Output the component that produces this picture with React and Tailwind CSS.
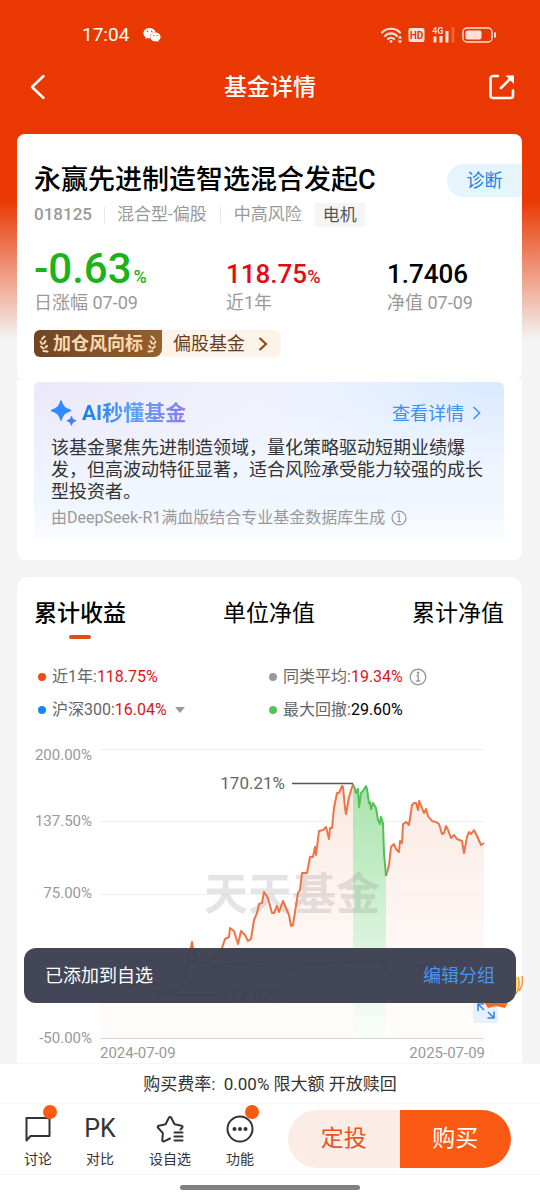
import { useState } from 'react'
import { FaWeixin } from 'react-icons/fa'

const STATS = [
  { label: '近1年', value: '118.75', unit: '%', color: 'text-[#e60a10]' },
  { label: '净值 07-09', value: '1.7406', unit: '', color: 'text-black' },
]

const TABS = ['累计收益', '单位净值', '累计净值']

const GRID = [
  { y: 9, label: '200.00%', ty: 20 },
  { y: 81, label: '137.50%', ty: 86 },
  { y: 154, label: '75.00%', ty: 158 },
]

// Fund return, before / during / after the max drawdown
const RISE =
  '66,240 74,246 82,243 92,247 104,244 116,252 124,250 134,253 144,249 150,240 154,222 158,202 160,214 164,222 174,224 180,216 184,217 188,208 191,199 195,197 196,188 200,191 204,204 207,191 211,195 214,201 217,199 220,180 223,173 225,164 228,163 230,152 234,158 238,173 240,173 243,166 245,172 249,161 252,168 255,175 257,186 259,185 261,172 264,153 266,150 268,133 273,133 276,117 279,117 281,107 282,115 285,91 289,90 292,87 295,99 296,88 298,88 300,68 303,53 305,53 308,46 309,47 311,68 312,74 315,57 319,44'
const DRAWDOWN =
  '319,44 321,49 322,53 324,49 325,67 327,53 329,51 332,46 333,49 335,63 336,62 337,69 339,63 342,68 344,80 346,84 347,77 349,83 350,113 352,136'
const RECOVERY =
  '352,136 355,125 357,107 360,104 362,109 365,112 366,101 368,103 369,84 372,82 375,85 378,65 380,63 382,63 384,70 385,61 388,68 390,73 392,69 394,76 398,81 402,82 405,84 408,94 410,93 412,86 414,90 417,98 420,95 423,99 428,101 430,113 433,97 435,92 437,94 440,90 443,96 447,105 450,103'
const AVERAGE =
  '66,240 90,241 120,243 145,240 158,222 168,228 185,227 205,222 225,226 250,231 275,226 300,224 330,220 348,222 353,236 370,228 400,224 430,220 450,214'
const HS300 =
  '66,240 90,242 120,245 145,242 158,220 168,230 185,224 205,225 225,222 250,232 275,223 300,223 330,222 348,221 353,232 370,226 400,226 430,222 450,217'

function StatusBar() {
  return (
    <div className="flex h-[54px] items-center justify-between pt-4 pr-[42px] pl-[82px] text-white">
      <div className="flex items-center gap-[14px]">
        <span className="text-[19px]">17:04</span>
        <FaWeixin className="h-[18px] w-[18px]" />
      </div>
      <svg viewBox="0 0 118 18" className="h-[18px] w-[118px] opacity-85" fill="none" stroke="currentColor">
        <g strokeWidth="2.200" strokeLinecap="round">
          <path d="M2 6.500c4.500-5 13.500-5 18 0" />
          <path d="M5 10c3-3.500 9-3.500 12 0" />
          <path d="M8 13c1.500-1.700 4.500-1.700 6 0" />
        </g>
        <circle cx="11" cy="15.500" r="1.400" fill="currentColor" stroke="none" />
        <path d="M20 9.500l2.300 3h-4.600zM20 17.500l2.300-3h-4.600z" fill="currentColor" stroke="none" />
        <rect x="28.500" y="2" width="16" height="14" rx="2" fill="currentColor" stroke="none" />
        <text x="36.500" y="13" textAnchor="middle" fontSize="10" fontWeight="700" fill="#e93802" stroke="none">HD</text>
        <text x="52" y="8" fontSize="9" fontWeight="700" fill="currentColor" stroke="none">4G</text>
        <path d="M55 10.500v6M61 10v6.500M67 5v11.500" strokeWidth="3" />
        <path d="M73 1v15.500" strokeWidth="3" opacity=".25" />
        <rect x="83" y="2" width="29" height="14" rx="4" strokeWidth="1.500" />
        <rect x="85.500" y="4.500" width="16" height="9" rx="2" fill="currentColor" stroke="none" />
        <path d="M115 6.500v5" strokeWidth="2" />
      </svg>
    </div>
  )
}

function Header() {
  return (
    <header className="mb-[14px] flex h-[66px] items-center justify-between pr-[24px] pl-[24px] text-white">
      <button aria-label="返回" className="flex w-7 justify-center">
        <svg viewBox="0 0 16 26" className="h-[26px] w-4" fill="none" stroke="currentColor" strokeWidth="2.500" strokeLinecap="round" strokeLinejoin="round">
          <path d="M13.500 2L2 13L13.500 24" />
        </svg>
      </button>
      <h1 className="pt-[2px] text-[23px] leading-8 font-medium">基金详情</h1>
      <button aria-label="分享">
        <svg viewBox="0 0 28 28" className="h-7 w-7" fill="none" stroke="currentColor" strokeWidth="2.600" strokeLinecap="round" strokeLinejoin="round">
          <path d="M10 3H5a2.500 2.500 0 0 0-2.500 2.500V22.500A2.500 2.500 0 0 0 5 25h17.500a2.500 2.500 0 0 0 2.500-2.500v-5" />
          <path d="M13 15L24 4" />
          <path d="M17.500 2.500h8.500v8.500z" fill="currentColor" stroke="none" />
        </svg>
      </button>
    </header>
  )
}

function InfoIcon({ className }) {
  return (
    <svg viewBox="0 0 18 18" className={className} fill="none" stroke="#999" strokeWidth="1.400">
      <circle cx="9" cy="9" r="7.800" />
      <path d="M7.500 7.500H9.200V13M7.200 13h4" />
      <circle cx="9" cy="4.900" r=".6" fill="#999" />
    </svg>
  )
}

function Laurel({ className }) {
  return (
    <svg viewBox="0 0 10 18" className={className} fill="none" stroke="#f8d9ae" strokeWidth="2" strokeLinecap="round">
      <path d="M5.500 1.500L3 4M1.500 6.500L3 9M6.500 6L5 8.500M2 11.500L4.500 13.500M8 11L6.500 12.500M4.500 16L8.500 16.500" />
    </svg>
  )
}

function FundCard() {
  return (
    <section className="rounded-lg bg-white pt-[26px] pb-[23px] pl-[17px]">
      <div className="flex h-10 items-center justify-between">
        <h2 className="text-[27px] leading-10 font-medium whitespace-nowrap text-black">永赢先进制造智选混合发起C</h2>
        <button className="h-[33px] w-[75px] shrink-0 rounded-l-full bg-[#e6f4fe] text-[18px] leading-[33px] text-[#1787e0]">诊断</button>
      </div>
      <div className="mt-[3px] flex h-6 items-center text-[17px] whitespace-nowrap text-[#999]">
        <span className="font-medium">018125</span>
        <span className="mx-3 h-4 w-px bg-[#e8e8e8]" />
        <span>混合型-偏股</span>
        <span className="mx-[13px] h-4 w-px bg-[#e8e8e8]" />
        <span>中高风险</span>
        <span className="ml-[13px] bg-[#f5f5f5] px-2 leading-6 text-[#555]">电机</span>
      </div>
      <div className="mt-[18px] grid grid-cols-[192fr_161fr_135fr] items-end">
        <div>
          <p className="h-12 text-[42px] leading-[48px] font-medium text-[#1ab31a]">
            -0.63<span className="ml-[2px] text-[18px] leading-none">%</span>
          </p>
          <p className="text-[18px] leading-5 text-[#999]">日涨幅 07-09</p>
        </div>
        {STATS.map(s => (
          <div key={s.label}>
            <p className={`h-[38px] text-[26px] leading-[38px] font-medium ${s.color}`}>
              {s.value}<span className="text-[18px] leading-none">{s.unit}</span>
            </p>
            <p className="text-[18px] leading-5 text-[#999]">{s.label}</p>
          </div>
        ))}
      </div>
      <a href="#rank" className="mt-[17px] flex h-[27px] w-[247px] items-center rounded-md bg-[#fdf3e8] text-[#6b3d1c]">
        <span className="flex h-full w-[128px] items-center justify-center gap-1 rounded-l-md rounded-br-lg bg-linear-to-r from-[#6f4525] to-[#96602f] text-[18px] font-bold text-[#f8d9ae]">
          <Laurel className="h-[18px] w-[10px]" />
          加仓风向标
          <Laurel className="h-[18px] w-[10px] -scale-x-100" />
        </span>
        <span className="ml-[11px] text-[18px]">偏股基金</span>
        <svg viewBox="0 0 10 16" className="ml-[13px] h-4 w-[10px]" fill="none" stroke="#8a4a1c" strokeWidth="2.200">
          <path d="M1.500 2L8 8L1.500 14" />
        </svg>
      </a>
    </section>
  )
}

function AiCard() {
  return (
    <section className="rounded-b-lg bg-white pt-[2px] pr-[18px] pb-[19px] pl-[17px]">
      <div className="rounded-md bg-[radial-gradient(ellipse_at_top_left,#ebe8f9_0%,transparent_50%),radial-gradient(ellipse_at_top_right,#d8e9ff_0%,transparent_40%),linear-gradient(#f4f6ff,#eff6ff_75%,#fbfdff)] px-[17px] pt-4 pb-[12px]">
        <div className="flex h-[30px] items-center">
          <svg viewBox="0 0 26 26" className="h-[26px] w-[26px]" fill="#2f8bff">
            <path d="M10 1c1.500 5.500 3.500 7.500 9.500 9.500C13.500 12.500 11.500 14.500 10 20C8.500 14.500 6.500 12.500.5 10.500C6.500 8.500 8.500 6.500 10 1z" stroke="#2f8bff" strokeWidth="1.500" strokeLinejoin="round" />
            <path d="M20.500 16c.8 2.800 1.600 3.800 4.700 4.700c-3.100 1-3.900 1.900-4.700 4.700c-.8-2.800-1.600-3.700-4.700-4.700c3.100-.9 3.900-1.900 4.700-4.700z" fill="#3f7ff2" stroke="#3f7ff2" strokeWidth=".8" />
          </svg>
          <h3 className="ml-[5px] bg-linear-to-r from-[#187bf0] via-[#55a0f8] to-[#8b7cf0] bg-clip-text text-[21px] leading-[30px] font-bold text-transparent">AI秒懂基金</h3>
          <a href="#ai" className="mr-[6px] ml-auto flex items-center gap-2 text-[18px] text-[#3d8ff0]">
            查看详情
            <svg viewBox="0 0 9 14" className="h-[14px] w-[9px]" fill="none" stroke="currentColor" strokeWidth="1.500">
              <path d="M1.500 1L7.500 7L1.500 13" />
            </svg>
          </a>
        </div>
        <p className="mt-[9px] -mr-2 text-[18px] leading-[22px] text-[#333]">
          该基金聚焦先进制造领域，量化策略驱动短期业绩爆
          <br />
          发，但高波动特征显著，适合风险承受能力较强的成长
          <br />
          型投资者。
        </p>
        <p className="mt-1 flex h-[22px] items-center gap-[6px] text-[16px] whitespace-nowrap text-[#999]">
          由DeepSeek-R1满血版结合专业基金数据库生成
          <InfoIcon className="h-4 w-4" />
        </p>
      </div>
    </section>
  )
}

function Legend({ dot, name, value, color, children }) {
  return (
    <div className="flex h-[22px] items-center text-[16px] whitespace-nowrap text-[#666]">
      <span className={`mr-[6px] h-2 w-2 rounded-full ${dot}`} />
      {name}:<span className={color}>{value}</span>
      {children}
    </div>
  )
}

function Chart() {
  return (
    <svg viewBox="0 0 470 323" className="mt-[19px] block w-full overflow-visible" role="img" aria-label="累计收益走势">
      <defs>
        <linearGradient id="orangeFill" x1="0" y1="44" x2="0" y2="298" gradientUnits="userSpaceOnUse">
          <stop offset="0" stopColor="#f9e4dc" stopOpacity=".85" />
          <stop offset="1" stopColor="#fff6f3" stopOpacity=".3" />
        </linearGradient>
        <linearGradient id="greenFill" x1="0" y1="44" x2="0" y2="298" gradientUnits="userSpaceOnUse">
          <stop offset="0" stopColor="#a9e3a9" />
          <stop offset=".7" stopColor="#e0f6e4" />
          <stop offset="1" stopColor="#fbfefb" />
        </linearGradient>
      </defs>
      {GRID.map(g => (
        <g key={g.y}>
          <path d={`M66 ${g.y}.5H450`} stroke="#f0f0f0" />
          <text x="58" y={g.ty} textAnchor="end" fontSize="15" fill="#999">{g.label}</text>
        </g>
      ))}
      <polygon points={`66,298 ${RISE} 319,298`} fill="url(#orangeFill)" />
      <polygon points={`319,298 ${DRAWDOWN} 352,298`} fill="url(#greenFill)" />
      <polygon points={`352,298 ${RECOVERY} 450,298`} fill="url(#orangeFill)" />
      <text x="170" y="170" fontSize="44" fontWeight="700" fill="#888" opacity=".22">天天基金</text>
      <g fill="none" strokeWidth="1">
        <polyline points={AVERAGE} stroke="#999" />
        <polyline points={HS300} stroke="#2f8bff" />
      </g>
      <g fill="none" strokeWidth="2" strokeLinejoin="round">
        <polyline points={RISE} stroke="#ee7445" />
        <polyline points={RECOVERY} stroke="#ee7445" />
        <polyline points={DRAWDOWN} stroke="#55bf5a" />
      </g>
      <path d="M258 43.500H319M121 255.500H182" stroke="#555" strokeWidth="1.500" />
      <text x="251" y="49" textAnchor="end" fontSize="17" fill="#666">170.21%</text>
      <text x="190" y="261" fontSize="17" fill="#666">-12.67%</text>
      <text x="58" y="303" textAnchor="end" fontSize="15" fill="#999">-50.00%</text>
      <path d="M66 298.500H450" stroke="#d5d5d5" />
      <text x="66" y="318" fontSize="15" fill="#999">2024-07-09</text>
      <text x="451" y="318" textAnchor="end" fontSize="15" fill="#999">2025-07-09</text>
      {/* fullscreen toggle with the mascot sitting on it */}
      <rect x="439" y="255" width="25" height="28" rx="2" fill="#e6f0ff" />
      <path d="M444 271v-7h6M444 264l6 6M454 272l6 6M460 271.500v6.500h-6.500" fill="none" stroke="#3d86e8" strokeWidth="1.600" />
      <path d="M450 262l4 6 8-2 9 2 3-6z" fill="#fa6a1e" />
      <path d="M481 233q6 10-1 22z" fill="#ffd35c" />
      <path d="M484 237q3 8-2 17M488 236q2 8-3 15" fill="none" stroke="#f5923a" strokeWidth="1.500" />
    </svg>
  )
}

function ChartCard() {
  const [tab, setTab] = useState(TABS[0])

  return (
    <section className="mt-[17px] rounded-t-xl bg-white pt-[21px] pr-[18px] pl-[17px]">
      <div className="flex justify-between">
        {TABS.map(t => (
          <button key={t} onClick={() => setTab(t)} className="flex h-[41px] flex-col items-center">
            <span className={`text-[23px] leading-8 text-black ${tab === t ? 'font-medium' : ''}`}>{t}</span>
            {tab === t && <span className="mt-[5px] h-1 w-[22px] rounded-full bg-[#e64a19]" />}
          </button>
        ))}
      </div>
      <div className="mt-[27px] grid grid-cols-[231fr_235fr] gap-y-[11px] pl-1">
        <Legend dot="bg-[#f04a10]" name="近1年" value="118.75%" color="text-[#d9151b]" />
        <Legend dot="bg-[#999]" name="同类平均" value="19.34%" color="text-[#d9151b]">
          <InfoIcon className="ml-[6px] h-[18px] w-[18px]" />
        </Legend>
        <Legend dot="bg-[#1787f5]" name="沪深300" value="16.04%" color="text-[#d9151b]">
          <button aria-label="选择指数" className="ml-2">
            <svg viewBox="0 0 10 6" className="h-[6px] w-[10px]" fill="#999">
              <path d="M0 0h10L5 6z" />
            </svg>
          </button>
        </Legend>
        <Legend dot="bg-[#55c45a]" name="最大回撤" value="29.60%" color="text-black" />
      </div>
      <Chart />
    </section>
  )
}

function NavItem({ label, width, badge, children }) {
  return (
    <button className={`flex shrink-0 flex-col items-center pt-1 text-[14px] leading-5 text-[#333] ${width}`}>
      <span className="relative flex h-8 w-8 items-center justify-center">
        {children}
        {badge && <span className="absolute -top-2 -right-[3px] h-[14px] w-[14px] rounded-full bg-[#fb5a14]" />}
      </span>
      <span className="mt-1">{label}</span>
    </button>
  )
}

function Footer() {
  return (
    <footer className="sticky bottom-0 bg-white">
      <div role="status" className="absolute right-6 bottom-full left-6 mb-[60px] flex h-[55px] items-center justify-between rounded-xl bg-[#3d4051]/97 px-[21px] text-[18px]">
        <span className="text-white">已添加到自选</span>
        <button className="text-[#4a93f0]">编辑分组</button>
      </div>
      <p className="h-10 border-t border-[#f5f5f5] text-center text-[17px] leading-10 text-[#333]">
        购买费率:&nbsp; 0.00% 限大额 开放赎回
      </p>
      <div className="flex h-[72px] items-center border-y border-[#f5f5f5] pr-[29px] pl-[7px]">
        <NavItem label="讨论" width="w-[62px]" badge>
          <svg viewBox="0 0 28 28" className="h-7 w-7" fill="none" stroke="currentColor" strokeWidth="2" strokeLinejoin="round">
            <path d="M2.500 3h23v18H6.500L2.500 25.500z" />
          </svg>
        </NavItem>
        <NavItem label="对比" width="w-[62px]">
          <span className="text-[25px]">PK</span>
        </NavItem>
        <NavItem label="设自选" width="w-[78px]">
          <svg viewBox="0 0 28 28" className="h-7 w-7" fill="none" stroke="currentColor" strokeWidth="2" strokeLinecap="round" strokeLinejoin="round">
            <path d="M14 23.500l-6 2.800c-1 .4-1.800-.2-1.700-1.200l.6-7l-4.900-5.300c-.7-.9-.3-1.800.7-2l6.900-1.500l3.300-6.500c.6-1 1.700-1 2.300 0l3.400 6.500l6.900 1.500c1 .2 1.400 1.100.7 2L24.500 14.500" />
            <path d="M18.500 17.500h8M18.500 21.500h8M18.500 25.500h8" />
          </svg>
        </NavItem>
        <NavItem label="功能" width="w-[62px]" badge>
          <svg viewBox="0 0 28 28" className="h-7 w-7" fill="none" stroke="currentColor" strokeWidth="2">
            <circle cx="14" cy="14" r="12.500" />
            <g fill="currentColor" stroke="none">
              <circle cx="8.500" cy="14" r="2" />
              <circle cx="14" cy="14" r="2" />
              <circle cx="19.500" cy="14" r="2" />
            </g>
          </svg>
        </NavItem>
        <div className="ml-[17px] flex h-[58px] flex-1 overflow-hidden rounded-full text-[23px]">
          <button className="flex-1 bg-[#fcece6] text-[#e8541c]">定投</button>
          <button className="flex-1 bg-[#fb5a14] text-white">购买</button>
        </div>
      </div>
      <div className="flex h-[25px] items-center justify-center">
        <span className="h-[5px] w-[180px] rounded-full bg-[#808080]" />
      </div>
    </footer>
  )
}

export default function App() {
  return (
    <div className="min-h-screen bg-[#f4f4f4] bg-[linear-gradient(#e93802_0px,#e93802_200px,#f4f4f4_340px)] font-[Roboto,'Noto_Sans_CJK_SC',sans-serif]">
      <StatusBar />
      <Header />
      <main className="pr-[18px] pl-[17px]">
        <FundCard />
        <AiCard />
        <ChartCard />
      </main>
      <Footer />
    </div>
  )
}
